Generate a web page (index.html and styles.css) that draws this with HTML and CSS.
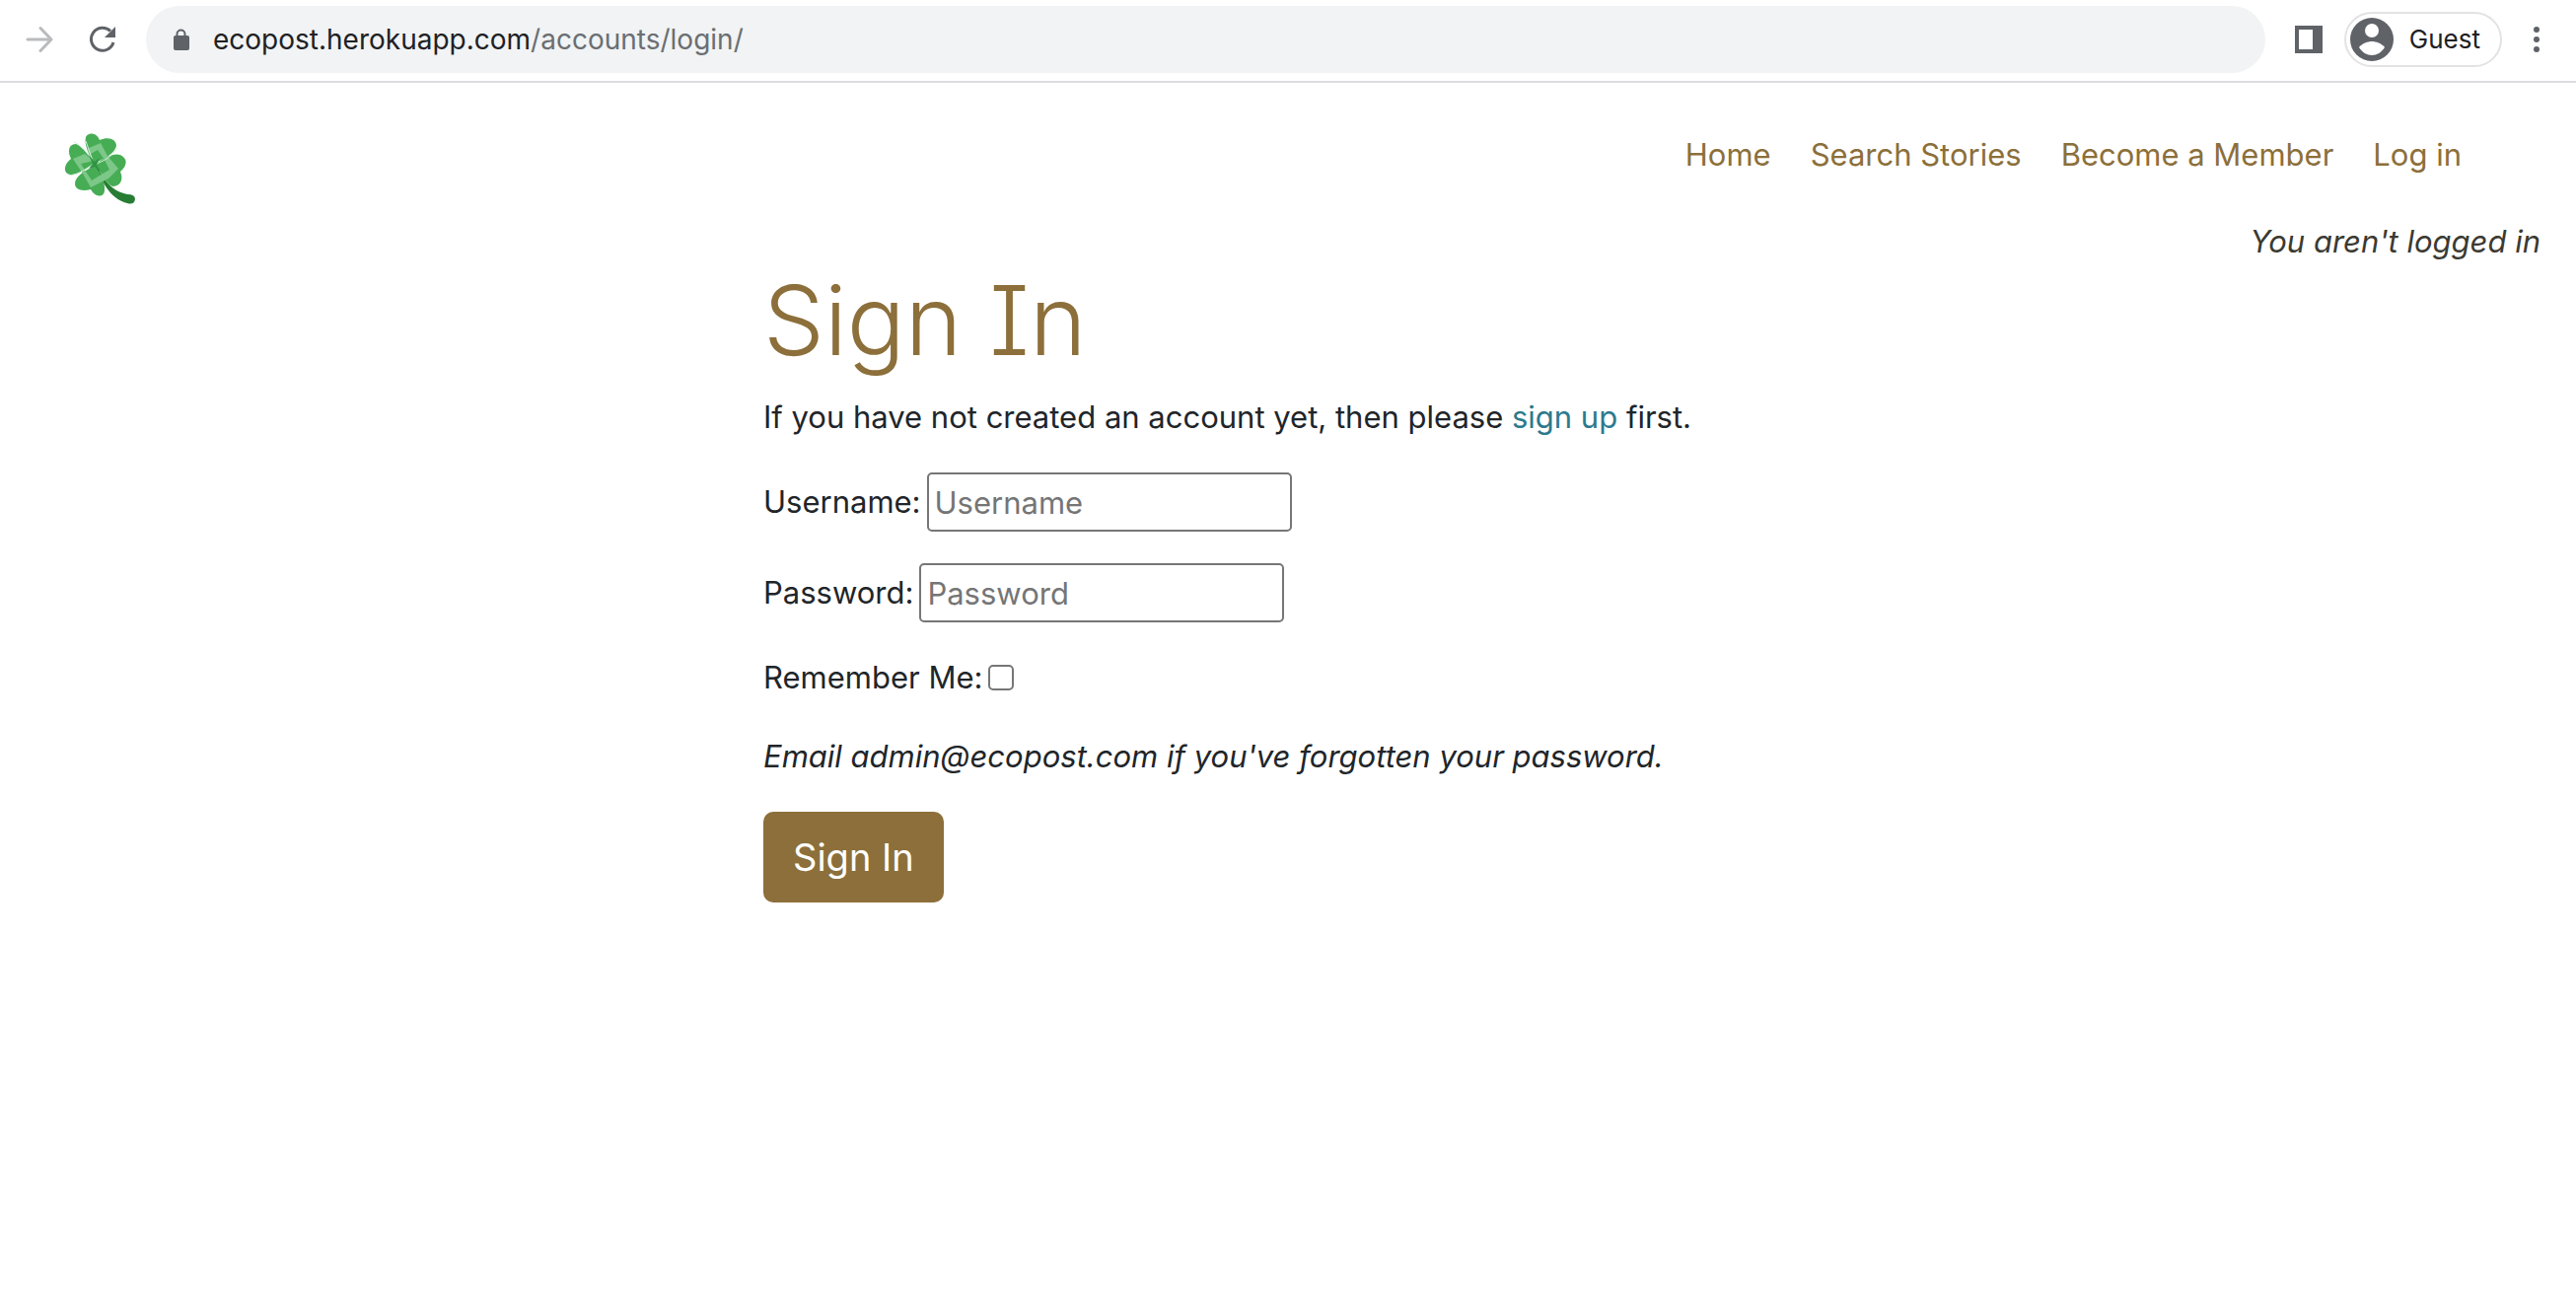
FILE: index.html
```html
<!DOCTYPE html>
<html lang="en">
<head>
<meta charset="utf-8">
<title>Sign In</title>
<link rel="stylesheet" href="styles.css">
</head>
<body>
<div class="toolbar">
  <button class="icon-button" type="button" aria-label="Forward" disabled>
    <svg width="28" height="28" viewBox="0 0 28 28" fill="none" stroke="#b9bbbe" stroke-width="3" stroke-linecap="round" stroke-linejoin="round"><path d="M2 14H26M15 2.500L26 14L15 25.500"/></svg>
  </button>
  <button class="icon-button" type="button" aria-label="Reload">
    <svg width="28" height="28" viewBox="0 0 28 28"><path d="M25 17A11.500 11.500 0 1 1 22 5.500" fill="none" stroke="#5f6368" stroke-width="3"/><path d="M27 1V12H16Z" fill="#5f6368"/></svg>
  </button>
  <div class="address">
    <svg width="18" height="22" viewBox="0 0 18 22"><path d="M5.500 8V5.500a4 4 0 0 1 8 0V8" fill="none" stroke="#5f6368" stroke-width="2"/><rect x="2" y="7" width="16" height="15" rx="2" fill="#5f6368"/></svg>
    <span class="url"><span class="host">ecopost.herokuapp.com</span>/accounts/login/</span>
  </div>
  <button class="icon-button" type="button" aria-label="Side panel">
    <svg width="28" height="28" viewBox="0 0 28 28"><path d="M0 0H28V28H0ZM4 4V24H18V4Z" fill="#5f6368" fill-rule="evenodd"/></svg>
  </button>
  <button class="profile" type="button">
    <svg width="44" height="44" viewBox="0 0 44 44"><circle cx="22" cy="22" r="22" fill="#5f6368"/><circle cx="22" cy="13" r="7" fill="#fff"/><path d="M9 30C12 26 18 24 22 24S32 26 35 30C32 35 27 38 22 38S12 35 9 30Z" fill="#fff"/></svg>
    Guest
  </button>
  <button class="icon-button" type="button" aria-label="Menu">
    <svg width="6" height="28" viewBox="0 0 6 28" fill="#5f6368"><circle cx="3" cy="4" r="3"/><circle cx="3" cy="14" r="3"/><circle cx="3" cy="24" r="3"/></svg>
  </button>
</div>
<header class="site-header">
  <a class="logo" href="#" aria-label="EcoPost">
    <svg width="76" height="76" viewBox="0 0 76 76">
      <path d="M32 34C39 45 45 60 64 64Q72 64 72 69Q71 75 64 73C45 68 39 50 31 35Z" fill="#287d34"/>
      <g fill="#46ad55">
        <path d="M31 32C25 23 20 14 22 6C24 1 33 1 36 9C45 5 53 8 53 15C51 23 41 28 31 32Z"/>
        <path d="M30 33C25 24 19 16 12 13C5 13 3 20 7 28C-1 34-1 43 6 44C14 45 24 37 30 33Z"/>
        <path d="M32 33C43 26 50 22 57 24C65 28 64 35 57 41C61 50 56 56 49 56C42 53 37 41 32 33Z"/>
        <path d="M31 35C21 40 11 46 11 53C11 60 19 61 27 59C32 68 41 67 41 60C42 51 36 42 31 35Z"/>
      </g>
      <path d="M23 18L37 12L44 25L55 38L45 48L27 57L19 43L9 28L21 23L27 28ZM34 19L27 23L30 30L17 33L22 41L28 50L36 45L46 39L41 29Z" fill="#7dc788" fill-rule="evenodd"/>
      <path d="M10 11C19 15 25 24 30 33L22 10M54 17C49 26 40 30 31 34M5 45C15 44 24 37 30 33" fill="none" stroke="#d5edd8"/>
      <path d="M24 23L31 31L36 27L33 34L38 42L31 36L25 38L29 33Z" fill="#2f9343"/>
    </svg>
  </a>
  <nav class="nav">
    <a href="#">Home</a>
    <a href="#">Search Stories</a>
    <a href="#">Become a Member</a>
    <a href="#">Log in</a>
  </nav>
</header>
<p class="status">You aren't logged in</p>
<main class="content">
  <h1>Sign In</h1>
  <p>If you have not created an account yet, then please <a href="#">sign up</a> first.</p>
  <form>
    <div class="field"><label for="username">Username:</label><input id="username" class="text-input" type="text" placeholder="Username"></div>
    <div class="field"><label for="password">Password:</label><input id="password" class="text-input" type="password" placeholder="Password"></div>
    <div class="field"><label for="remember">Remember Me:</label><input id="remember" class="check" type="checkbox"></div>
    <p><em>Email admin@ecopost.com if you've forgotten your password.</em></p>
    <button class="submit" type="submit">Sign In</button>
  </form>
</main>
</body>
</html>
```
FILE: styles.css
```css
* { box-sizing: border-box; }
body {
  margin: 0;
  background: #fff;
  color: #212529;
  font-family: Inter, "Liberation Sans", sans-serif;
  font-size: 31px;
  line-height: 48px;
}
p, h1 { margin: 0; }
button { font: inherit; cursor: pointer; }
svg { display: block; flex: none; }

.toolbar {
  display: flex;
  align-items: center;
  height: 84px;
  padding: 0 37px 2px 26px;
  border-bottom: 2px solid #dadce0;
}
.icon-button { flex: none; padding: 0; border: 0; background: none; }
.icon-button + .icon-button { margin-left: 36px; }
.address {
  flex: 1;
  display: flex;
  align-items: center;
  gap: 24px;
  height: 68px;
  margin: 0 30px;
  padding: 0 26px;
  border-radius: 34px;
  background: #f1f3f4;
}
.url { color: #6b6e72; font-size: 28px; }
.host { color: #202124; }
.profile {
  display: flex;
  align-items: center;
  gap: 16px;
  height: 56px;
  margin: 0 32px 0 22px;
  padding: 0 20px 0 4px;
  border: 2px solid #e3e3e5;
  border-radius: 28px;
  background: #fff;
  color: #202124;
  font-size: 26px;
}

.site-header {
  display: flex;
  justify-content: space-between;
  align-items: flex-start;
  padding: 49px 116px 12px 65px;
}
.nav { display: flex; gap: 40px; }
.nav a { color: #8c6f3a; text-decoration: none; }
.status { padding: 0 36px; color: #3b3a32; font-style: italic; text-align: right; }

.content { max-width: 1064px; margin: 0 auto; }
h1 {
  color: #8c6f3a;
  font-size: 98px;
  font-weight: 300;
  line-height: 112px;
  font-feature-settings: "cv08";
  margin-bottom: 18px;
}
.content a { color: #2b7a8e; text-decoration: none; }
.content p { margin-bottom: 32px; }
.field { display: flex; align-items: center; margin-bottom: 32px; }
.text-input {
  width: 370px;
  height: 60px;
  margin-left: 6px;
  padding: 2px 6px;
  border: 2px solid #767676;
  border-radius: 5px;
  font: inherit;
}
.text-input::placeholder { color: #757575; }
.check {
  appearance: none;
  width: 26px;
  height: 26px;
  margin: 0 0 0 6px;
  border: 2px solid #767676;
  border-radius: 5px;
}
.submit {
  padding: 16px 30px;
  border: 0;
  border-radius: 10px;
  background: #8c6f3a;
  color: #fff;
  font-size: 38px;
  line-height: 60px;
}
```
